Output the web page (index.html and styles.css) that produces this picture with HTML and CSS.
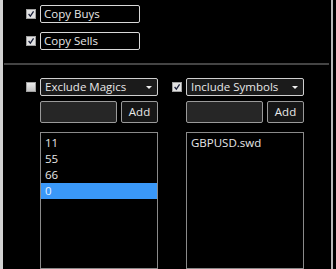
FILE: index.html
```html
<!DOCTYPE html>
<html lang="en">
<head>
  <meta charset="UTF-8">
  <title>Copy Settings</title>
  <link rel="stylesheet" href="styles.css">
</head>
<body>

  <div class="panel">
    <div class="copy">
      <div class="row">
        <span class="cb on"><svg viewBox="0 0 10 10"><path d="M2 5 L4.2 7.6 L8.2 1.8" /></svg></span>
        <span class="field">Copy Buys</span>
      </div>
      <div class="row">
        <span class="cb on"><svg viewBox="0 0 10 10"><path d="M2 5 L4.2 7.6 L8.2 1.8" /></svg></span>
        <span class="field">Copy Sells</span>
      </div>
    </div>

    <div class="sep"></div>

    <div class="filters">
      <div class="col">
        <span class="cb"></span>
        <div class="select">Exclude Magics<span class="arrow"></span></div>
        <div class="add-row">
          <span class="input"></span>
          <span class="btn">Add</span>
        </div>
        <ul class="list">
          <li>11</li>
          <li>55</li>
          <li>66</li>
          <li class="sel">0</li>
        </ul>
      </div>

      <div class="col">
        <span class="cb on"><svg viewBox="0 0 10 10"><path d="M2 5 L4.2 7.6 L8.2 1.8" /></svg></span>
        <div class="select">Include Symbols<span class="arrow"></span></div>
        <div class="add-row">
          <span class="input"></span>
          <span class="btn">Add</span>
        </div>
        <ul class="list">
          <li>GBPUSD.swd</li>
        </ul>
      </div>
    </div>
  </div>

</body>
</html>
```

FILE: styles.css
```css
:root {
  --text: #e8e8e8;
  --edge: #b8b8b8;
  --box-line: #9a9a9a;
  --pick: #3a98f8;
}

body {
  margin: 0;
  background: #000;
  font-family: 'Open Sans', 'DejaVu Sans', sans-serif;
  font-size: 11.5px;
  color: var(--text);
}

.panel {
  width: 328px;
  height: 269px;
  border-left: 3px solid #d2d2d2;
  border-right: 2px solid var(--edge);
  background: #000;
  overflow: hidden;
}

.copy {
  display: flex;
  flex-direction: column;
  gap: 9px;
  padding: 5px 0 0 23px;
}

.row {
  display: flex;
  align-items: center;
  gap: 4px;
}

.cb {
  display: block;
  box-sizing: border-box;
  width: 10px;
  height: 10px;
  background: linear-gradient(#ececec, #c4c4c4);
  border: 1px solid #a0a0a0;
}

.cb.on {
  background: #e2e2e2;
}

.cb svg {
  display: block;
  width: 8px;
  height: 8px;
}

.cb path {
  fill: none;
  stroke: #1a1f3a;
  stroke-width: 1.6;
}

.field {
  box-sizing: border-box;
  width: 100px;
  height: 18px;
  line-height: 16px;
  padding-left: 3px;
  border: 1px solid #d8d8d8;
  border-radius: 2px;
}

.sep {
  height: 2px;
  margin: 13px 2px 0 1px;
  background: #444;
}

.filters {
  display: grid;
  grid-template-columns: 132px 132px;
  column-gap: 14px;
  padding: 13px 0 0 23px;
}

.col {
  display: grid;
  grid-template-columns: 10px 118px;
  column-gap: 4px;
  align-items: center;
}

.select {
  position: relative;
  box-sizing: border-box;
  height: 18px;
  line-height: 16px;
  padding-left: 4px;
  border: 1px solid #cfcfcf;
  border-radius: 2px;
  background: #1b1b1b;
}

.arrow {
  position: absolute;
  right: 5px;
  top: 7px;
  border-left: 3px solid transparent;
  border-right: 3px solid transparent;
  border-top: 3px solid #f0f0f0;
}

.add-row {
  grid-column: 2;
  display: flex;
  gap: 4px;
  margin-top: 5px;
}

.input {
  box-sizing: border-box;
  width: 77px;
  height: 22px;
  border: 1px solid var(--box-line);
  border-radius: 2px;
  background: #262626;
}

.btn {
  box-sizing: border-box;
  width: 37px;
  height: 22px;
  line-height: 20px;
  text-align: center;
  border: 1px solid var(--box-line);
  border-radius: 2px;
  background: #161616;
}

.list {
  grid-column: 2;
  box-sizing: border-box;
  height: 137px;
  margin: 9px 0 0;
  padding: 2px 0 0;
  list-style: none;
  border: 1px solid #8a8a8a;
  align-self: start;
}

.list li {
  height: 16px;
  line-height: 16px;
  padding-left: 4px;
}

.list li.sel {
  background: var(--pick);
  color: #eaf4ff;
}
```
